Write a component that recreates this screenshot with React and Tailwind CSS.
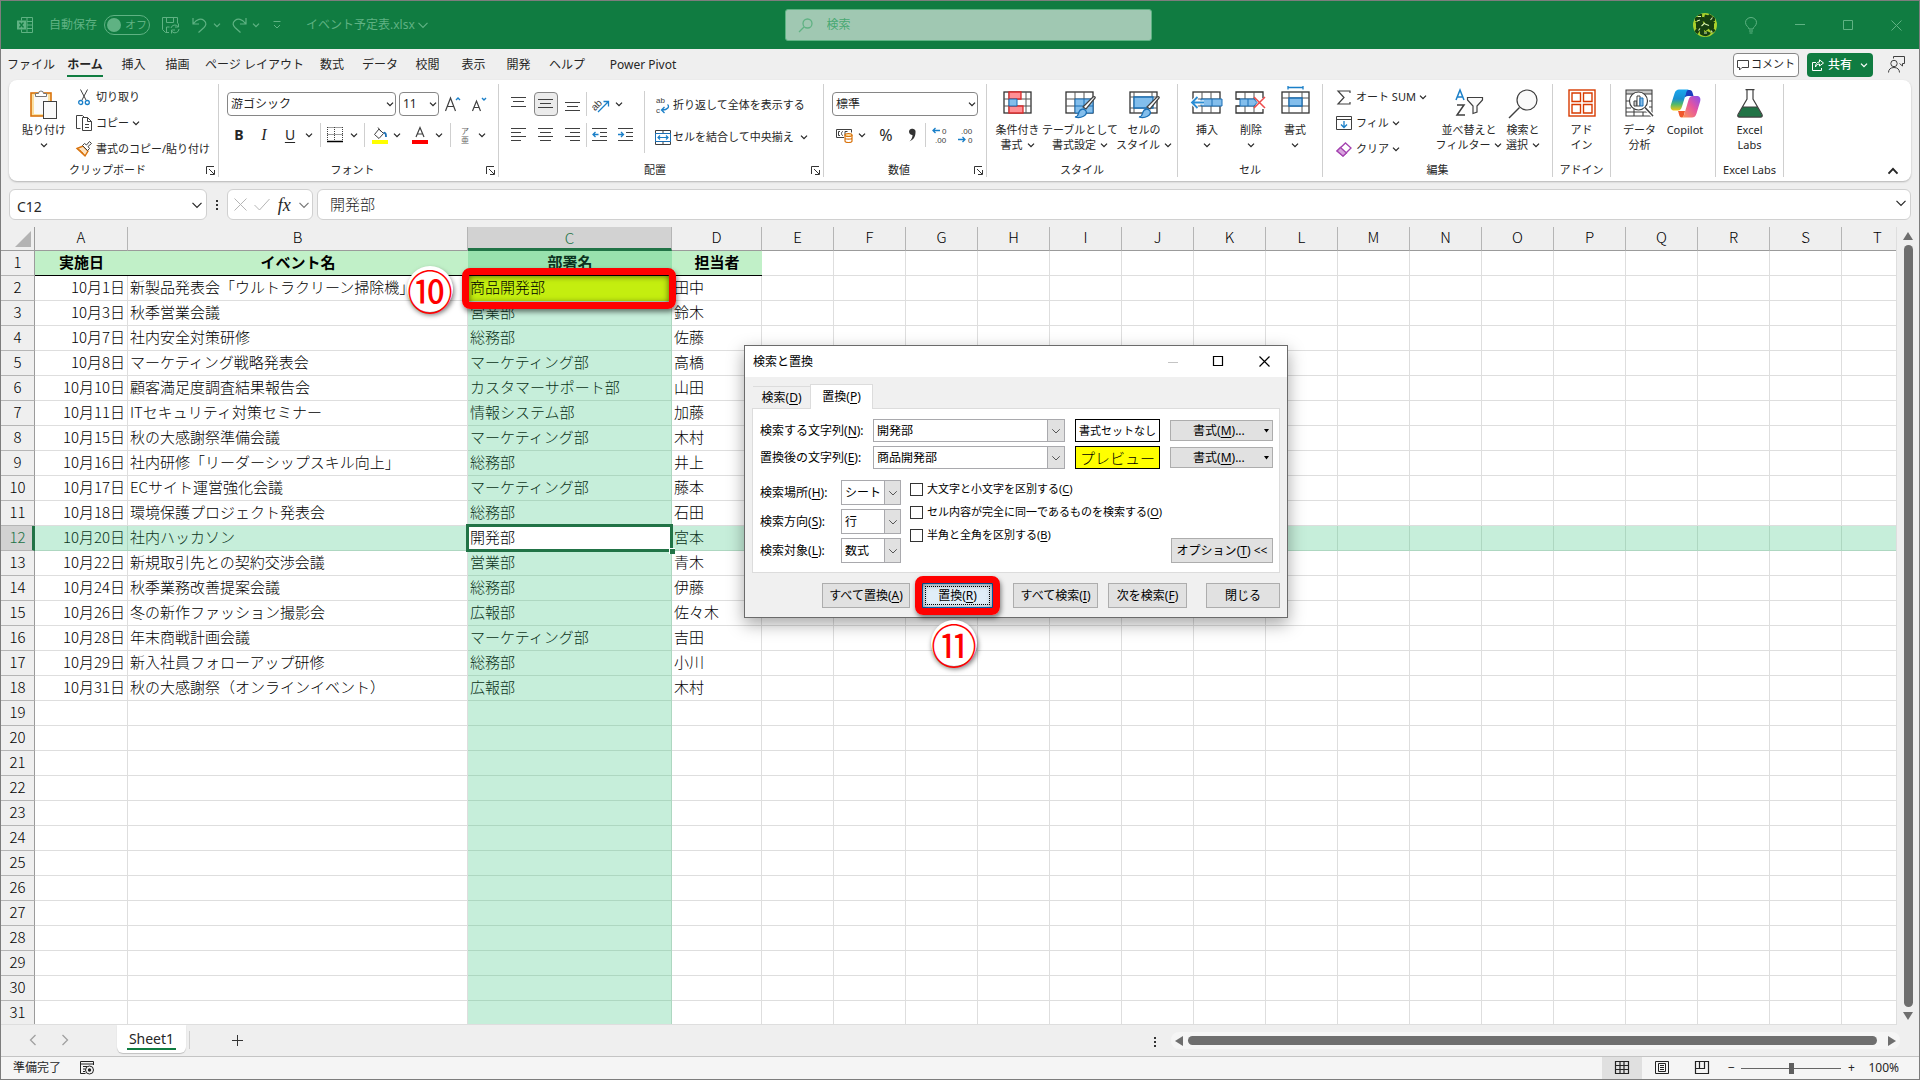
import {useState} from "react";

const columns = [
    {name: 'A', width: 'w-[93px]'},
    {name: 'B', width: 'w-[340px]'},
    {name: 'C', width: 'w-[204px]'},
    {name: 'D', width: 'w-[90px]'},
    ...'EFGHIJKLMNOPQRST'.split('').map((name) => ({name, width: 'w-[72px]'})),
];

const headings = ['実施日', 'イベント名', '部署名', '担当者'];

const events = [
    ['10月1日', '新製品発表会「ウルトラクリーン掃除機」', '商品開発部', '田中'],
    ['10月3日', '秋季営業会議', '営業部', '鈴木'],
    ['10月7日', '社内安全対策研修', '総務部', '佐藤'],
    ['10月8日', 'マーケティング戦略発表会', 'マーケティング部', '高橋'],
    ['10月10日', '顧客満足度調査結果報告会', 'カスタマーサポート部', '山田'],
    ['10月11日', 'ITセキュリティ対策セミナー', '情報システム部', '加藤'],
    ['10月15日', '秋の大感謝祭準備会議', 'マーケティング部', '木村'],
    ['10月16日', '社内研修「リーダーシップスキル向上」', '総務部', '井上'],
    ['10月17日', 'ECサイト運営強化会議', 'マーケティング部', '藤本'],
    ['10月18日', '環境保護プロジェクト発表会', '総務部', '石田'],
    ['10月20日', '社内ハッカソン', '開発部', '宮本'],
    ['10月22日', '新規取引先との契約交渉会議', '営業部', '青木'],
    ['10月24日', '秋季業務改善提案会議', '総務部', '伊藤'],
    ['10月26日', '冬の新作ファッション撮影会', '広報部', '佐々木'],
    ['10月28日', '年末商戦計画会議', 'マーケティング部', '吉田'],
    ['10月29日', '新入社員フォローアップ研修', '総務部', '小川'],
    ['10月31日', '秋の大感謝祭（オンラインイベント）', '広報部', '木村'],
];

const tabs = [
    {name: 'ファイル', width: 'w-[52px]'},
    {name: 'ホーム', width: 'w-[56px]', active: true},
    {name: '挿入', width: 'w-[41px]'},
    {name: '描画', width: 'w-[47px]'},
    {name: 'ページ レイアウト', width: 'w-[107px]'},
    {name: '数式', width: 'w-[48px]'},
    {name: 'データ', width: 'w-[48px]'},
    {name: '校閲', width: 'w-[47px]'},
    {name: '表示', width: 'w-[45px]'},
    {name: '開発', width: 'w-[45px]'},
    {name: 'ヘルプ', width: 'w-[52px]'},
    {name: 'Power Pivot', width: 'w-[100px]'},
];

const ROW_COUNT = 31;
const ACTIVE_ROW = 12;

/* ---------- small pieces ---------- */

function Chevron({className = 'w-2 h-2', up = false, thin = false}) {
    return (
        <svg className={`shrink-0 ${className}`} viewBox="0 0 8 8" fill="none" stroke="currentColor"
             strokeWidth={thin ? 0.8 : 1.3}>
            <path d={up ? 'M1 5.8 4 2.6 7 5.8' : 'M1 2.6 4 5.6 7 2.6'}/>
        </svg>
    );
}

function Svg({w, h, children}) {
    return (
        <svg className="shrink-0 overflow-visible font-['Liberation_Sans',sans-serif]" width={w} height={h}
             viewBox={`0 0 ${w} ${h}`} fill="none" stroke="#404040" strokeWidth="1">
            {children}
        </svg>
    );
}

function IconButton({label, className = 'w-6', children}) {
    return (
        <button type="button" aria-label={label} className={`h-6 shrink-0 flex items-center justify-center ${className}`}>
            {children}
        </button>
    );
}

function Arrow({label, className = 'w-4'}) {
    return <IconButton label={label} className={className}><Chevron/></IconButton>;
}

function Divider({className = 'mx-1'}) {
    return <div className={`w-px h-6 shrink-0 bg-[#cfcfcf] ${className}`}></div>;
}

function RibbonGroup({name, className, bodyClassName = '', launcher = false, children}) {
    return (
        <section className={`h-[93px] mt-1 shrink-0 flex flex-col border-r border-[#cfcfcf] ${className}`}>
            <div className={`flex-1 flex ${bodyClassName}`}>{children}</div>
            <div className="h-[14px] flex items-center">
                <div className="flex-1 text-center leading-[14px] whitespace-nowrap">{name}</div>
                {launcher && (
                    <button type="button" aria-label={`${name}の設定`} className="w-[12px] flex">
                        <Svg w={9} h={9}>
                            <path d="M.5 8V.5H8M3 3l5 5M8.5 4v4.5H4" stroke="#333"/>
                        </Svg>
                    </button>
                )}
            </div>
        </section>
    );
}

function BigButton({icon, lines, arrow, className}) {
    return (
        <button type="button" className={`shrink-0 pt-[5px] flex flex-col items-center justify-start ${className}`}>
            <span className="h-[33px] flex items-start">{icon}</span>
            {lines.map((line, index) => (
                <span key={index} className="h-[15px] leading-[15px] flex items-center gap-1 whitespace-nowrap">
                    {line}
                    {arrow && index === lines.length - 1 && <Chevron/>}
                </span>
            ))}
        </button>
    );
}

function SmallButton({icon, text, arrow}) {
    return (
        <button type="button" className="h-[26px] flex items-center gap-[3px] whitespace-nowrap">
            <span className="w-[18px] flex justify-center">{icon}</span>
            {text}
            {arrow && <Chevron/>}
        </button>
    );
}

function RibbonSelect({label, value, className}) {
    return (
        <div className={`relative h-6 ${className}`}>
            <select aria-label={label} defaultValue={value}
                    className="w-full h-full pl-[3px] appearance-none rounded border border-[#868686] bg-white text-xs leading-none">
                <option>{value}</option>
            </select>
            <Chevron className="absolute right-[2px] top-2 w-2 h-2 pointer-events-none"/>
        </div>
    );
}

/* ---------- icons ---------- */

const PasteIcon = (
    <Svg w={28} h={31}>
        <rect x="1" y="4" width="20" height="23" fill="#fbdfa0" stroke="#d9730d" strokeWidth="1.6"/>
        <rect x="4" y="6" width="14" height="19" fill="#fafafa" stroke="none"/>
        <path d="M5.5 7.500V4.500h3a2.500 2.500 0 0 1 5 0h3v3z" fill="#fff" stroke="#777"/>
        <rect x="13.500" y="12.500" width="13" height="17" fill="#fafafa"/>
    </Svg>
);

const CutIcon = (
    <Svg w={12} h={17}>
        <path d="M2.500.500 8 11M9.500.500 4 11"/>
        <circle cx="2.700" cy="13.500" r="2" stroke="#1a7fc8" strokeWidth="1.300"/>
        <circle cx="9.300" cy="13.500" r="2" stroke="#1a7fc8" strokeWidth="1.300"/>
    </Svg>
);

const CopyIcon = (
    <Svg w={17} h={16}>
        <path d="M4.500 13.500h-4V.500h6l2 2"/>
        <path d="M6.500 2.500h5l4 4v9h-9zM11.500 2.500v4h4M9 9.500h4M9 12.500h4"/>
    </Svg>
);

const BrushIcon = (
    <Svg w={16} h={16}>
        <path d="M1 7.500 7 5l5 5-3 5z" fill="#fde3c0" stroke="#d9730d" strokeWidth="1.400"/>
        <path d="M1 7.500c3 1 6 4 8 7.500" stroke="#d9730d"/>
        <path d="m6.500 4.500 2-2 2 1.500 3-3.500 2 2-3.500 3 1.500 2-2 2z" fill="#fff"/>
    </Svg>
);

const CellGrid = (
    <>
        <rect x="1" y="1" width="27" height="21" fill="#fff" stroke="#333" strokeWidth="1.300"/>
        <path d="M10 1v21M19 1v21M1 8h27M1 15h27" stroke="#555"/>
    </>
);

const PaintBrush = (
    <>
        <path d="m30 7-9 11-3-2L28 6c1-1 3 0 2 1z" fill="#fff" stroke="#444" strokeWidth="1.200"/>
        <path d="M10 26c3 0 3-2 4-5 1-3 5-4 7-1 2 4-5 8-11 6z" fill="#83beec" stroke="#1a6fb5" strokeWidth="1.300"/>
    </>
);

const ConditionalIcon = (
    <Svg w={29} h={30}>
        <rect x="1" y="1" width="27" height="21" fill="#fff" stroke="#333" strokeWidth="1.300"/>
        <path d="M6 1v21M23 1v21M1 8h27M1 15h27" stroke="#555"/>
        <path d="M6 1h12v7H6zM6 15h14v7H6z" fill="#ff8f94" stroke="#d92c2c" strokeWidth="1.300"/>
        <path d="M6 8h8v7H6z" fill="#83beec" stroke="#1a6fb5"/>
    </Svg>
);

const TableStyleIcon = (
    <Svg w={31} h={30}>
        {CellGrid}
        <path d="M10 8h18v14H10z" fill="#83beec" stroke="#1a6fb5"/>
        <path d="M19 8v14M10 15h18" stroke="#1a6fb5"/>
        {PaintBrush}
    </Svg>
);

const CellStyleIcon = (
    <Svg w={31} h={30}>
        <rect x="1" y="1" width="27" height="21" fill="#fff" stroke="#333" strokeWidth="1.300"/>
        <path d="M5 1v21M23 1v5M1 6h27M1 17h27" stroke="#555"/>
        <path d="M5 6h19v11H5z" fill="#83beec" stroke="#1a6fb5" strokeWidth="1.300"/>
        {PaintBrush}
    </Svg>
);

const InsertIcon = (
    <Svg w={32} h={30}>
        <rect x="2" y="1" width="27" height="21" fill="#fff" stroke="#333" strokeWidth="1.300"/>
        <path d="M11 1v21M20 1v21M2 15h27M2 8h27" stroke="#555"/>
        <path d="M10 8h21v7H10zM21 8v7" fill="#83beec" stroke="#1a6fb5"/>
        <path d="M13 11.500H1M6 6.500l-5 5 5 5" stroke="#fff" strokeWidth="4"/>
        <path d="M13 11.500H1M6.500 6l-5.500 5.500L6.500 17" stroke="#2a8dd4" strokeWidth="1.800"/>
    </Svg>
);

const DeleteIcon = (
    <Svg w={32} h={30}>
        <path d="M28 7V1H1v7h4M5 15H1v7h27v-4" stroke="#333" strokeWidth="1.300"/>
        <path d="M10 1v7M19 1v7M10 15v7M19 15v7M1 8h20M1 15h20" stroke="#555"/>
        <path d="M5 8h14l3 3.500-3 3.500H5zM13 8v7" fill="#83beec" stroke="#1a6fb5"/>
        <path d="m19 6 11 11M30 6 19 17" stroke="#ee4b4b" strokeWidth="1.500"/>
    </Svg>
);

const FormatIcon = (
    <Svg w={29} h={36}>
        <path d="M7 1.500h15M7 0v3.500M22 0v3.500" stroke="#1a7fc8" strokeWidth="1.300"/>
        <rect x="1" y="6" width="27" height="21" fill="#fff" stroke="#333" strokeWidth="1.300"/>
        <path d="M8 6v21M21 6v21M1 12h27M1 20h27" stroke="#555"/>
        <path d="M8 12h13v8H8z" fill="#83beec" stroke="#1a6fb5" strokeWidth="1.300"/>
    </Svg>
);

const SumIcon = <Svg w={14} h={15}><path d="M13 3V1H1l6 6.500L1 14h12v-2" strokeWidth="1.200"/></Svg>;

const FillIcon = (
    <Svg w={16} h={14}>
        <path d="M.500.500h15v13H.500zM.500 3.500h15"/>
        <path d="M8 5v6.500M5 8.500l3 3 3-3" stroke="#1a7fc8" strokeWidth="1.300"/>
    </Svg>
);

const ClearIcon = (
    <Svg w={16} h={15}>
        <path d="M9.500 1 15 6 7 14 1 9z" fill="#fff" stroke="#a443b0" strokeWidth="1.300"/>
        <path d="M4.500 5.500 10.500 11 7 14 1 9z" fill="#d9a4de" stroke="#a443b0" strokeWidth="1.300"/>
    </Svg>
);

const SortIcon = (
    <Svg w={28} h={30}>
        <path d="m1 11 4-10 4 10M2.500 8h5" stroke="#1a7fc8" strokeWidth="1.500"/>
        <path d="M2 16h7L2 26h8" strokeWidth="1.500"/>
        <path d="M12.500 8.500h15v2.500l-5.500 6v6l-4 1.500V17l-5.500-6z" fill="#fafafa" strokeWidth="1.200"/>
    </Svg>
);

const FindIcon = (
    <Svg w={30} h={30}>
        <circle cx="19" cy="11" r="10" fill="#fafafa" strokeWidth="1.200"/>
        <path d="M11.500 18.500 1 29" strokeWidth="1.500"/>
    </Svg>
);

const AddinIcon = (
    <Svg w={28} h={28}>
        <g stroke="#d83b01" strokeWidth="1.400">
            <rect x="1" y="1" width="26" height="26"/>
            <path d="M4 4h8.500v8.500H4zM15.500 4H24v8.500h-8.500zM4 15.500h8.500V24H4zM15.500 15.500H24V24h-8.500z"/>
        </g>
    </Svg>
);

const AnalyzeIcon = (
    <Svg w={29} h={29}>
        <path d="M1 1h26v4H1z" fill="#c8c8c8" stroke="none"/>
        <path d="M1 1h26v26H1zM1 5h26M1 12h3M1 19h5M1 23h26M9 20v7M18 23v4M24 12h3M24 18h3" strokeWidth="1.100"/>
        <circle cx="13.500" cy="12" r="9" fill="#fff" strokeWidth="1.200"/>
        <path d="m20 18.500 8 8.500" stroke="#fff" strokeWidth="4"/>
        <path d="m20 18.500 8 8.500" strokeWidth="1.500"/>
        <path d="M9 12h3v5H9z" fill="#c8c8c8"/>
        <path d="M12 7h3v10h-3z" fill="#fff"/>
        <path d="M15 9h3v8h-3z" fill="#83beec" stroke="#1a6fb5"/>
    </Svg>
);

const CopilotIcon = (
    <svg width="31" height="29" viewBox="0 0 31 29">
        <defs>
            <linearGradient id="copilotLeft" x1="0" y1="0" x2="0" y2="1">
                <stop offset="0" stopColor="#1ba7ee"/>
                <stop offset=".45" stopColor="#1a8fd0"/>
                <stop offset=".7" stopColor="#52b96b"/>
                <stop offset="1" stopColor="#f3c614"/>
            </linearGradient>
            <linearGradient id="copilotRight" x1="1" y1="0" x2="0" y2="1">
                <stop offset="0" stopColor="#8a4ff0"/>
                <stop offset=".45" stopColor="#e455a0"/>
                <stop offset="1" stopColor="#ff9a50"/>
            </linearGradient>
        </defs>
        <path d="M8 22h7l-1 4c-.500 1.500-1 2.500-2.500 2.500C9 28.500 9 24 8 22z" fill="#f0582b"/>
        <path d="M16 1h4c2 0 2.500 2 3.500 6h-5.500c-2 0-3 1-3.500 2z" fill="#1c3fbf"/>
        <path d="M9 .500h10c-2 .500-2.500 2-3 4l-4 13c-.700 2.500-2 4-4 4H4c-3 0-4-2.500-3-6L4.500 4.500C5.500 1.500 7 .500 9 .500z"
              fill="url(#copilotLeft)"/>
        <path d="M22 28.500H11.500c2-.500 2.500-2 3-4l4-13.500c.700-2.500 2-4 4-4H27c3 0 4 2.500 3 6l-3.500 11.500c-1 3-2.500 4-4.500 4z"
              fill="url(#copilotRight)"/>
    </svg>
);

const FlaskIcon = (
    <Svg w={26} h={29}>
        <path d="M5.500 18h15l4.500 8c.500 1.500 0 2-1.500 2h-21C1 28 .500 27.500 1 26z" fill="#217346" stroke="none"/>
        <path d="M8.500.700h9M10 1v9L1 25.500c-.700 1.500 0 2.700 1.500 2.700h21c1.500 0 2.200-1.200 1.500-2.700L16 10V1M5.500 18h15"
              strokeWidth="1.200"/>
    </Svg>
);

function AlignIcon({lines}) {
    return (
        <Svg w={16} h={16}>
            {lines.map(([x1, x2, y], index) => <path key={index} d={`M${x1} ${y}.5H${x2}`} strokeWidth="1.200"/>)}
        </Svg>
    );
}

/* ---------- window ---------- */

function TitleBar() {
    return (
        <header className="h-12 shrink-0 flex items-center bg-[#107c41] text-[#5fb283]">
            <div className="flex-1 flex items-center pl-4 text-xs">
                <svg width="16" height="16" viewBox="0 0 16 16" fill="none" stroke="currentColor">
                    <path d="M4.500 3.500v-3h11v15h-11v-3M10 .500v15M10 4.500h5.500M10 8h5.500M10 11.500h5.500"/>
                    <path d="M0 3.500h9v9H0z" fill="currentColor" stroke="none"/>
                    <path d="m2.500 5.500 4 5M6.500 5.500l-4 5" stroke="#107c41" strokeWidth="1.300"/>
                </svg>
                <span className="ml-4 w-12 whitespace-nowrap" id="autosave">自動保存</span>
                <button type="button" role="switch" aria-checked="false" aria-labelledby="autosave"
                        className="ml-[7px] w-[46px] h-5 rounded-full border border-[#5fb283] flex items-center px-[2px] gap-1 text-[11px]">
                    <span className="w-[14px] h-[14px] rounded-full bg-[#5fb283]"></span>オフ
                </button>
                <button type="button" aria-label="上書き保存" className="ml-3">
                    <svg width="18" height="17" viewBox="0 0 18 17" fill="none" stroke="currentColor">
                        <path d="M7 15.500H3.500l-3-3V.500h15v6M4.500.500v5h7v-5M4.500 15v-5h3"/>
                        <path d="M9 11a4 4 0 0 1 7-1.500M16.500 6.500v3.500H13M17 12a4 4 0 0 1-7 2.500M9.500 16.500V13H13"/>
                    </svg>
                </button>
                <button type="button" aria-label="元に戻す" className="ml-3 flex items-center gap-[5px]">
                    <svg width="16" height="16" viewBox="0 0 16 16" fill="none" stroke="currentColor" strokeWidth="1.200">
                        <path d="M1 1v6h6M1.500 6.500C5 2 9 1 12 3.500s2 5 0 7L6.500 15.500"/>
                    </svg>
                    <Chevron/>
                </button>
                <button type="button" aria-label="やり直し" className="ml-[10px] flex items-center gap-[5px]">
                    <svg width="16" height="16" viewBox="0 0 16 16" fill="none" stroke="currentColor" strokeWidth="1.200">
                        <path d="M15 1v6H9M14.500 6.500C11 2 7 1 4 3.500s-2 5 0 7l5.500 5"/>
                    </svg>
                    <Chevron/>
                </button>
                <button type="button" aria-label="クイック アクセス ツール バーのカスタマイズ" className="ml-3">
                    <svg width="10" height="10" viewBox="0 0 10 10" fill="none" stroke="currentColor">
                        <path d="M1.500 1.500h7M2 5l3 3 3-3"/>
                    </svg>
                </button>
                <button type="button" className="ml-6 flex items-center gap-[2px] whitespace-nowrap">
                    イベント予定表.xlsx <Chevron thin className="w-3 h-3"/>
                </button>
            </div>
            <label className="w-[367px] h-8 rounded-[3px] border border-[#5fb283] bg-[#a0c8b2] flex items-center px-3 gap-[14px] text-xs">
                <svg width="15" height="15" viewBox="0 0 15 15" fill="none" stroke="currentColor" strokeWidth="1.300">
                    <circle cx="9.500" cy="5.500" r="4.500"/>
                    <path d="M6 9 1 14"/>
                </svg>
                <input type="search" aria-label="検索" placeholder="検索"
                       className="flex-1 bg-transparent outline-none placeholder:text-[#48a873]"/>
            </label>
            <div className="flex-1 flex items-center justify-end">
                <button type="button" aria-label="アカウント" className="w-6 h-6 mr-[26px]">
                    <svg width="24" height="24" viewBox="0 0 24 24">
                        <clipPath id="avatar"><circle cx="12" cy="12" r="12"/></clipPath>
                        <g clipPath="url(#avatar)">
                            <path d="M0 0h24v24H0z" fill="#a9d12c"/>
                            <path d="M2 6h9M7 1v8M3 11l7-2M14 2l-2 7M12 6h10M18 2l-5 9M16 8l5 3M3 13h18M6 15l-3 5M9 14v6c3 2 6 1 7-1M12 14l2 3M17 14l4 5"
                                  fill="none" stroke="#173f10" strokeWidth="4.200"/>
                            <path d="M5 3.500h3M4 8l3-1M12 10 8.500 13M12 11l4 1.500M5.500 17.500l1.500-2M11 20h3M17.500 7l2-2.500M18 17.500l1.500 2"
                                  fill="none" stroke="#d8efb0" strokeWidth="1.100"/>
                        </g>
                    </svg>
                </button>
                <button type="button" aria-label="ヒント" className="w-4 h-6 flex items-center justify-center mr-9">
                    <svg width="12" height="17" viewBox="0 0 12 17" fill="none" stroke="currentColor">
                        <path d="M4 12c0-2-3.500-3-3.500-6.500a5.500 5 0 0 1 11 0C11.500 9 8 10 8 12zM4 14h4M4.500 16h3"/>
                    </svg>
                </button>
                <button type="button" aria-label="最小化" className="w-3 h-6 flex items-center mr-9">
                    <svg width="10" height="10" viewBox="0 0 10 10" stroke="currentColor"><path d="M0 4.500h10"/></svg>
                </button>
                <button type="button" aria-label="最大化" className="w-3 h-6 flex items-center mr-9">
                    <svg width="11" height="11" viewBox="0 0 11 11" fill="none" stroke="currentColor">
                        <path d="M.500.500h9v9h-9z"/>
                    </svg>
                </button>
                <button type="button" aria-label="閉じる" className="w-3 h-6 flex items-center mr-4">
                    <svg width="11" height="11" viewBox="0 0 11 11" stroke="currentColor"><path d="m.500.500 10 10M10.500.500l-10 10"/></svg>
                </button>
            </div>
        </header>
    );
}

function TabBar() {
    return (
        <nav className="h-[31px] shrink-0 flex items-center pl-1 pr-[14px] text-xs text-[#262626]">
            {tabs.map((tab) => (
                <button key={tab.name} type="button"
                        className={`h-full shrink-0 flex items-start justify-center whitespace-nowrap ${tab.width}`}>
                    <span className={tab.active
                        ? 'h-7 leading-8 font-bold border-b-2 border-[#107c41]'
                        : 'h-7 leading-8'}>
                        {tab.name}
                    </span>
                </button>
            ))}
            <div className="flex-1"></div>
            <button type="button" className="h-6 px-[3px] gap-[2px] flex items-center rounded border border-[#868686] bg-white text-[11px] whitespace-nowrap">
                <Svg w={12} h={12}><path d="M.500 1.500h11v7H5l-2.500 2.500V8.500h-2z"/></Svg>
                コメント
            </button>
            <button type="button" className="ml-2 h-6 px-[5px] gap-1 flex items-center rounded bg-[#107c41] text-white font-medium whitespace-nowrap">
                <svg width="12" height="12" viewBox="0 0 12 12" fill="none" stroke="currentColor">
                    <path d="M4 3.500H.500v8h9V9M7.500.800 11.500 4 7.500 7V5C5 5 4 6.500 3.500 8c0-3 1.500-5 4-5z"/>
                </svg>
                共有
                <Chevron className="ml-1 w-2 h-2"/>
            </button>
            <button type="button" aria-label="共同編集者" className="ml-[15px]">
                <Svg w={17} h={17}>
                    <circle cx="6" cy="7.500" r="3.200"/>
                    <path d="M.500 16.500c0-3 2-5 5.500-5s5.500 2 5.500 5M5.500 2.500v-2h11v7h-2v2.500l-3-2.500"/>
                </Svg>
            </button>
        </nav>
    );
}

function Ribbon() {
    return (
        <div className="h-[101px] mx-2 shrink-0 flex rounded-lg bg-white shadow-[0_1px_2px_rgba(0,0,0,0.25)] text-[11px] text-[#262626] overflow-hidden">
            <RibbonGroup name="クリップボード" launcher className="w-[210px]">
                <BigButton icon={PasteIcon} lines={['貼り付け', '']} arrow className="ml-1 w-[62px]"/>
                <div className="flex flex-col">
                    <SmallButton icon={CutIcon} text="切り取り"/>
                    <SmallButton icon={CopyIcon} text="コピー" arrow/>
                    <SmallButton icon={BrushIcon} text="書式のコピー/貼り付け"/>
                </div>
            </RibbonGroup>

            <RibbonGroup name="フォント" launcher className="w-[280px]" bodyClassName="pl-2">
                <div className="pt-2 flex flex-col gap-[7px]">
                    <div className="flex">
                        <RibbonSelect label="フォント" value="游ゴシック" className="w-[169px]"/>
                        <RibbonSelect label="フォント サイズ" value="11" className="w-10 ml-[3px]"/>
                        <IconButton label="フォント サイズの拡大" className="w-7">
                            <Svg w={16} h={16}>
                                <path d="m.500 15 5-13 5 13M2.500 10.500h6" strokeWidth="1.200"/>
                                <path d="m11 4 2-2 2 2" stroke="#1a7fc8" strokeWidth="1.400"/>
                            </Svg>
                        </IconButton>
                        <IconButton label="フォント サイズの縮小" className="w-6">
                            <Svg w={16} h={16}>
                                <path d="m1.500 15 4-10 4 10M3 11.500h5" strokeWidth="1.200"/>
                                <path d="m11 2 2 2 2-2" stroke="#1a7fc8" strokeWidth="1.400"/>
                            </Svg>
                        </IconButton>
                    </div>
                    <div className="flex">
                        <IconButton label="太字"><b className="text-sm">B</b></IconButton>
                        <IconButton label="斜体" className="w-[26px]">
                            <i className="text-base font-['Liberation_Serif',serif]">I</i>
                        </IconButton>
                        <IconButton label="下線" className="w-[26px]"><u className="text-sm underline-offset-2">U</u></IconButton>
                        <Arrow label="下線の種類" className="w-3"/>
                        <Divider className="mx-[5px]"/>
                        <IconButton label="罫線" className="w-[18px]">
                            <Svg w={16} h={16}>
                                <path d="M.500.500h15M.500 7.500h15M.500 0v14M7.500 0v14M15.500 0v14" strokeDasharray="1 1"/>
                                <path d="M0 14.500h16" stroke="#000" strokeWidth="1.600"/>
                            </Svg>
                        </IconButton>
                        <Arrow label="罫線の種類" className="w-5"/>
                        <Divider className="ml-0 mr-[6px]"/>
                        <IconButton label="塗りつぶしの色" className="w-[18px]">
                            <Svg w={16} h={17}>
                                <path d="M7 2 2.500 7.500 7 11.500 11.500 6.500zM6 .500l3 4"/>
                                <path d="M11.500 6c2-1 2.500 1 2.500 4" stroke="#1a6fb5" strokeWidth="1.800"/>
                                <path d="M0 13h16v4H0z" fill="#ff0" stroke="none"/>
                            </Svg>
                        </IconButton>
                        <Arrow label="塗りつぶしの色の選択"/>
                        <IconButton label="フォントの色" className="w-[26px] ml-[2px]">
                            <Svg w={16} h={17}>
                                <path d="m4 10 4-9.500L12 10M5.500 7h5" strokeWidth="1.200"/>
                                <path d="M0 13h16v4H0z" fill="#f00" stroke="none"/>
                            </Svg>
                        </IconButton>
                        <Arrow label="フォントの色の選択" className="w-3"/>
                        <Divider className="mx-[5px]"/>
                        <IconButton label="ふりがなの表示" className="w-[18px]">
                            <span className="flex flex-col text-[8px] leading-[9px] text-[#666]"><span>ア</span><span>亜</span></span>
                        </IconButton>
                        <Arrow label="ふりがなの設定"/>
                    </div>
                </div>
            </RibbonGroup>

            <RibbonGroup name="配置" launcher className="w-[325px]" bodyClassName="pl-[6px]">
                <div className="pt-2 grid grid-cols-[27px_27px_27px] gap-y-[7px] content-start justify-items-center">
                    <IconButton label="上揃え"><AlignIcon lines={[[0, 15, 1], [2, 13, 5], [0, 15, 10]]}/></IconButton>
                    <IconButton label="上下中央揃え" className="w-6 rounded border border-[#868686] bg-[#ebebeb]">
                        <AlignIcon lines={[[0, 15, 3], [2, 13, 7], [0, 15, 11]]}/>
                    </IconButton>
                    <IconButton label="下揃え"><AlignIcon lines={[[0, 15, 6], [2, 13, 10], [0, 15, 14]]}/></IconButton>
                    <IconButton label="左揃え"><AlignIcon lines={[[0, 15, 1], [0, 10, 5], [0, 15, 9], [0, 10, 13]]}/></IconButton>
                    <IconButton label="中央揃え"><AlignIcon lines={[[0, 15, 1], [2, 13, 5], [0, 15, 9], [2, 13, 13]]}/></IconButton>
                    <IconButton label="右揃え"><AlignIcon lines={[[0, 15, 1], [5, 15, 5], [0, 15, 9], [5, 15, 13]]}/></IconButton>
                </div>
                <div className="pt-2 w-[58px] flex flex-col gap-[7px]">
                    <div className="flex">
                        <Divider className="mr-[2px]"/>
                        <IconButton label="方向">
                            <Svg w={18} h={17}>
                                <text x="-1" y="12" fontSize="10" fill="#404040" stroke="none" transform="rotate(-45 5 9)">ab</text>
                                <path d="M6 16 16 6M11.500 5.500H16.500V10.500" stroke="#1a7fc8" strokeWidth="1.300"/>
                            </Svg>
                        </IconButton>
                        <Arrow label="方向の選択" className="w-3"/>
                    </div>
                    <div className="flex">
                        <Divider className="mr-0"/>
                        <IconButton label="インデントを減らす" className="w-[26px]">
                            <Svg w={16} h={14}>
                                <path d="M0 .500h15M8 4.500h7M8 8.500h7M0 12.500h15"/>
                                <path d="M6.500 6.500H1M3.500 4 1 6.500 3.500 9" stroke="#1a7fc8" strokeWidth="1.300"/>
                            </Svg>
                        </IconButton>
                        <IconButton label="インデントを増やす" className="w-[26px]">
                            <Svg w={16} h={14}>
                                <path d="M0 .500h15M8 4.500h7M8 8.500h7M0 12.500h15"/>
                                <path d="M0 6.500h5.500M3 4l2.500 2.500L3 9" stroke="#1a7fc8" strokeWidth="1.300"/>
                            </Svg>
                        </IconButton>
                    </div>
                </div>
                <div className="mt-[7px] h-[62px] pl-[10px] flex flex-col gap-2 border-l border-[#cfcfcf]">
                    <button type="button" className="h-6 pt-1 flex items-center gap-[2px] whitespace-nowrap">
                        <Svg w={16} h={18}>
                            <text x="1" y="7" fontSize="8" fill="#404040" stroke="none">ab</text>
                            <text x="1" y="17" fontSize="8" fill="#404040" stroke="none">c</text>
                            <path d="M12.500 8.500c2.500 2 0 5.500-5 5.500M9.500 11l-3 3 3 3" stroke="#1a7fc8" strokeWidth="1.300"/>
                        </Svg>
                        折り返して全体を表示する
                    </button>
                    <button type="button" className="h-6 pt-1 flex items-center gap-[2px] whitespace-nowrap">
                        <Svg w={16} h={15}>
                            <path d="M.500.500h15v14H.500zM8 .500v3M8 11.500v3"/>
                            <path d="M.500 3.500h15v8H.500z" fill="#fff" stroke="#1a6fb5"/>
                            <path d="M3 7.500h10M5 5.500l-2 2 2 2M11 5.500l2 2-2 2" stroke="#1a7fc8" strokeWidth="1.200"/>
                        </Svg>
                        セルを結合して中央揃え
                        <Chevron className="ml-1 w-2 h-2"/>
                    </button>
                </div>
            </RibbonGroup>

            <RibbonGroup name="数値" launcher className="w-[163px]" bodyClassName="pl-2">
                <div className="pt-2 flex flex-col gap-[7px]">
                    <RibbonSelect label="表示形式" value="標準" className="w-[146px]"/>
                    <div className="flex pl-1">
                        <IconButton label="通貨表示形式" className="w-[17px]">
                            <Svg w={17} h={15}>
                                <path d="M8 9.500H.500v-8h15v3M4 3.500H2.500v4H4M7 3.500c-2 0-2 4 0 4M9 7V3.500h2.500"/>
                                <path d="M9 7v6c0 2 7 2 7 0V7M9 10c0 1.500 7 1.500 7 0" fill="#fff" stroke="#d9730d" strokeWidth="1.200"/>
                                <ellipse cx="12.500" cy="7" rx="3.500" ry="1.500" fill="#fbdfa0" stroke="#d9730d" strokeWidth="1.200"/>
                            </Svg>
                        </IconButton>
                        <Arrow label="通貨の選択" className="w-[18px]"/>
                        <IconButton label="パーセント スタイル" className="w-[30px]"><span className="text-base">%</span></IconButton>
                        <IconButton label="桁区切りスタイル" className="w-[22px]">
                            <Svg w={9} h={14}>
                                <path d="M1 3.500a3 3 0 1 1 6.500 1C7.500 9 5 12 1.500 13.500 4 11 4.500 9 4.500 7 2.500 7 1 5.500 1 3.500z" fill="#333" stroke="none"/>
                            </Svg>
                        </IconButton>
                        <Divider className="ml-[2px] mr-[6px]"/>
                        <IconButton label="小数点以下の表示桁数を増やす" className="w-4">
                            <Svg w={16} h={18}>
                                <text x="10" y="8" fontSize="8" fill="#404040" stroke="none">0</text>
                                <text x="3" y="17" fontSize="8" fill="#404040" stroke="none">.00</text>
                                <path d="M8 4.500H1M3.500 2 1 4.500 3.500 7" stroke="#1a7fc8" strokeWidth="1.300"/>
                            </Svg>
                        </IconButton>
                        <IconButton label="小数点以下の表示桁数を減らす" className="w-4 ml-[10px]">
                            <Svg w={16} h={18}>
                                <text x="3" y="8" fontSize="8" fill="#404040" stroke="none">.00</text>
                                <text x="10" y="17" fontSize="8" fill="#404040" stroke="none">0</text>
                                <path d="M0 13.500h7M4.500 11 7 13.500 4.500 16" stroke="#1a7fc8" strokeWidth="1.300"/>
                            </Svg>
                        </IconButton>
                    </div>
                </div>
            </RibbonGroup>

            <RibbonGroup name="スタイル" className="w-[191px]">
                <BigButton icon={<span className="pt-[2px]">{ConditionalIcon}</span>} lines={['条件付き', '書式']} arrow className="w-[61px]"/>
                <BigButton icon={<span className="pt-[2px]">{TableStyleIcon}</span>} lines={['テーブルとして', '書式設定']} arrow className="w-[64px]"/>
                <BigButton icon={<span className="pt-[2px]">{CellStyleIcon}</span>} lines={['セルの', 'スタイル']} arrow className="w-[64px]"/>
            </RibbonGroup>

            <RibbonGroup name="セル" className="w-[145px]" bodyClassName="pl-[7px]">
                <BigButton icon={<span className="pt-[2px]">{InsertIcon}</span>} lines={['挿入', '']} arrow className="w-11"/>
                <BigButton icon={<span className="pt-[2px]">{DeleteIcon}</span>} lines={['削除', '']} arrow className="w-11"/>
                <BigButton icon={<span className="-mt-[3px]">{FormatIcon}</span>} lines={['書式', '']} arrow className="w-11"/>
            </RibbonGroup>

            <RibbonGroup name="編集" className="w-[230px]" bodyClassName="pl-3">
                <div className="w-[102px] flex flex-col items-start">
                    <SmallButton icon={SumIcon} text="オート SUM" arrow/>
                    <SmallButton icon={FillIcon} text="フィル" arrow/>
                    <SmallButton icon={ClearIcon} text="クリア" arrow/>
                </div>
                <BigButton icon={SortIcon} lines={['並べ替えと', 'フィルター']} arrow className="w-[64px]"/>
                <BigButton icon={FindIcon} lines={['検索と', '選択']} arrow className="w-11"/>
            </RibbonGroup>

            <RibbonGroup name="アドイン" className="w-[58px]">
                <BigButton icon={AddinIcon} lines={['アド', 'イン']} className="w-full"/>
            </RibbonGroup>

            <RibbonGroup name="" className="w-[105px]" bodyClassName="pl-[6px]">
                <BigButton icon={AnalyzeIcon} lines={['データ', '分析']} className="w-[45px]"/>
                <BigButton icon={CopilotIcon} lines={['Copilot']} className="w-[46px]"/>
            </RibbonGroup>

            <RibbonGroup name="Excel Labs" className="w-[68px]">
                <BigButton icon={FlaskIcon} lines={['Excel', 'Labs']} className="w-full"/>
            </RibbonGroup>

            <div className="flex-1 flex items-end justify-end pr-3 pb-1">
                <button type="button" aria-label="リボンを折りたたむ"><Chevron up className="w-3 h-3"/></button>
            </div>
        </div>
    );
}

function FormulaBar() {
    return (
        <div className="h-[31px] mt-2 mb-[7px] mx-2 shrink-0 flex text-[#262626]">
            <div className="relative w-[198px]">
                <input aria-label="名前ボックス" defaultValue="C12"
                       className="w-full h-full pl-[7px] pt-1 rounded-md border border-[#d0d0d0] bg-white text-sm"/>
                <Chevron thin className="absolute right-1 top-[10px] w-3 h-3"/>
            </div>
            <div className="w-5 flex flex-col items-center justify-center gap-[2px]">
                <span className="w-[2px] h-[2px] bg-[#333]"></span>
                <span className="w-[2px] h-[2px] bg-[#333]"></span>
                <span className="w-[2px] h-[2px] bg-[#333]"></span>
            </div>
            <div className="w-[86px] mr-1 flex items-center justify-between pl-[6px] pr-[2px] rounded-md border border-[#d0d0d0] bg-white">
                <button type="button" aria-label="キャンセル">
                    <Svg w={13} h={13}><path d="m.500.500 12 12M12.500.500l-12 12" stroke="#b5b5b5"/></Svg>
                </button>
                <button type="button" aria-label="入力">
                    <Svg w={16} h={13}><path d="m.500 7 5 5L15.500 1" stroke="#b5b5b5"/></Svg>
                </button>
                <button type="button" aria-label="関数の挿入" className="font-['Liberation_Serif',serif] italic text-lg leading-none">
                    fx
                </button>
                <Chevron thin className="w-3 h-3 text-[#777]"/>
            </div>
            <div className="relative flex-1">
                <input aria-label="数式バー" defaultValue="開発部"
                       className="w-full h-full pl-3 pb-[3px] rounded-md border border-[#d0d0d0] bg-white text-[15px] font-light"/>
                <Chevron thin className="absolute right-1 top-2 w-3 h-3"/>
            </div>
        </div>
    );
}

function StepNumber({className, children}) {
    return (
        <span className={`absolute z-20 w-[46px] h-[46px] flex items-center justify-center rounded-full bg-white shadow-[1px_3px_5px_rgba(0,0,0,0.55)] font-['Noto_Sans_CJK_JP',sans-serif] text-[46px] leading-none font-normal text-[#ff0000] ${className}`}>
            {children}
        </span>
    );
}

function Cell({row, column, index}) {
    const isActiveRow = row === ACTIVE_ROW;
    const isActiveColumn = column.name === 'C';

    // Title line of the list
    if (row === 1 && index < 4) {
        return (
            <th scope="col"
                className={`h-[25px] p-0 align-top border-b border-black text-center font-bold ${isActiveColumn ? 'bg-[#98e2ae] text-[#0b3320]' : 'bg-[#c1f0c8]'}`}>
                {headings[index]}
            </th>
        );
    }

    const value = events[row - 2]?.[index] ?? '';

    if (isActiveColumn && row === 2) {
        return (
            <td className="relative h-[25px] px-[2px] py-0 align-top bg-[#c4ee0f]">
                {value}
                <span className="absolute z-10 -left-[6px] -right-1 -inset-y-2 rounded-lg border-[7px] border-[#ff0000] shadow-[1px_3px_5px_rgba(0,0,0,0.5),inset_0_1px_6px_rgba(0,0,0,0.6)]"></span>
                <StepNumber className="-left-[61px] -top-[10px]">⑩</StepNumber>
            </td>
        );
    }

    if (isActiveColumn && isActiveRow) {
        return (
            <td className="relative h-[25px] px-[2px] py-0 align-top bg-white">
                {value}
                <span className="absolute -inset-[2px] right-[-1px] bottom-[-1px] border-3 border-[#217346]"></span>
                <span className="absolute -right-[3px] -bottom-[3px] w-[6px] h-[6px] border-t border-l border-white bg-[#217346]"></span>
            </td>
        );
    }

    const tint = isActiveRow || isActiveColumn
        ? 'bg-[#c6eeda] border-[#aed7c1] text-[#0b3320]'
        : 'border-[#dedede]';

    return (
        <td className={`h-[25px] px-[2px] py-0 align-top border-r border-b ${tint} ${index === 0 ? 'text-right' : ''}`}>
            {value}
        </td>
    );
}

function Sheet() {
    const rows = Array.from({length: ROW_COUNT}, (_, index) => index + 1);

    return (
        <div className="flex-1 min-h-0 flex">
            <div className="flex-1 min-w-0 overflow-hidden border-b border-r border-[#dedede] bg-white">
                <table className="table-fixed w-px border-separate border-spacing-0 font-['Noto_Sans_CJK_JP',sans-serif] text-[15px] leading-[22px] font-light text-black whitespace-nowrap">
                    <colgroup>
                        <col className="w-[34px]"/>
                        {columns.map((column) => <col key={column.name} className={column.width}/>)}
                    </colgroup>
                    <thead>
                    <tr>
                        <td className="h-6 p-0 bg-[#efefef] border-r border-b border-[#9b9b9b]">
                            <svg className="ml-[14px]" width="16" height="16" viewBox="0 0 16 16">
                                <path d="M16 0v16H0z" fill="#b3b3b3"/>
                            </svg>
                        </td>
                        {columns.map((column) => (
                            <th key={column.name} scope="col"
                                className={column.name === 'C'
                                    ? 'h-6 p-0 leading-5 font-light bg-[#d2d2d2] text-[#217346] border-r border-r-[#b5b5b5] border-b-3 border-b-[#217346]'
                                    : 'h-6 p-0 align-top leading-5 font-light bg-[#efefef] border-r border-r-[#b5b5b5] border-b border-b-[#9b9b9b]'}>
                                {column.name}
                            </th>
                        ))}
                    </tr>
                    </thead>
                    <tbody>
                    {rows.map((row) => (
                        <tr key={row}>
                            <th scope="row"
                                className={row === ACTIVE_ROW
                                    ? 'h-[25px] p-0 pl-[2px] align-top font-light bg-[#d2d2d2] text-[#217346] border-b border-b-[#b5b5b5] border-r-3 border-r-[#217346]'
                                    : 'h-[25px] p-0 align-top font-light bg-[#efefef] border-b border-b-[#b5b5b5] border-r border-r-[#9b9b9b]'}>
                                {row}
                            </th>
                            {columns.map((column, index) => (
                                <Cell key={column.name} row={row} column={column} index={index}/>
                            ))}
                        </tr>
                    ))}
                    </tbody>
                </table>
            </div>
            <div className="w-[22px] flex flex-col items-center py-[5px] gap-[5px]">
                <svg width="10" height="8" viewBox="0 0 10 8"><path d="m5 0 5 8H0z" fill="#6e6e6e"/></svg>
                <div className="flex-1 w-[9px] rounded-full bg-[#6e6e6e]"></div>
                <svg width="10" height="8" viewBox="0 0 10 8"><path d="M5 8 0 0h10z" fill="#6e6e6e"/></svg>
            </div>
        </div>
    );
}

function SheetTabs() {
    return (
        <div className="h-8 shrink-0 flex items-start border-b border-[#c4c4c4] text-[#262626]">
            <button type="button" aria-label="前のシート" className="ml-[25px] mt-[9px]">
                <Svg w={14} h={12}><path d="m9.500 1-5 5 5 5" stroke="#a0a0a0" strokeWidth="1.300"/></Svg>
            </button>
            <button type="button" aria-label="次のシート" className="ml-[18px] mt-[9px]">
                <Svg w={14} h={12}><path d="m4.500 1 5 5-5 5" stroke="#a0a0a0" strokeWidth="1.300"/></Svg>
            </button>
            <button type="button" className="ml-[45px] w-[69px] h-7 flex items-start justify-center rounded-b-md bg-white shadow-[0_1px_1px_rgba(0,0,0,0.2)] text-sm">
                <span className="h-[25px] leading-7 px-[2px] border-b-2 border-[#107c41]">Sheet1</span>
            </button>
            <div className="ml-[3px] mt-[6px] w-px h-[18px] bg-[#cfcfcf]"></div>
            <button type="button" aria-label="新しいシート" className="ml-[41px] mt-[9px]">
                <Svg w={13} h={13}><path d="M6.500 1v11M1 6.500h11" stroke="#333"/></Svg>
            </button>
            <div className="flex-1"></div>
            <div className="mt-3 flex flex-col gap-[2px]">
                <span className="w-[2px] h-[2px] bg-[#333]"></span>
                <span className="w-[2px] h-[2px] bg-[#333]"></span>
                <span className="w-[2px] h-[2px] bg-[#333]"></span>
            </div>
            <div className="ml-[15px] mr-[19px] mt-[7px] w-[38%] h-[17px] px-1 gap-[5px] rounded-lg bg-[#f5f5f5] flex items-center">
                <svg width="8" height="10" viewBox="0 0 8 10"><path d="m0 5 8-5v10z" fill="#6e6e6e"/></svg>
                <div className="flex-1 h-[9px] mr-[6px] rounded-full bg-[#6e6e6e]"></div>
                <svg width="8" height="10" viewBox="0 0 8 10"><path d="M8 5 0 0v10z" fill="#6e6e6e"/></svg>
            </div>
        </div>
    );
}

function StatusBar() {
    const [zoom, setZoom] = useState(50);

    return (
        <footer className="h-[22px] shrink-0 flex items-center pl-3 pr-5 bg-[#f5f5f5] text-xs text-[#262626]">
            <span>準備完了</span>
            <button type="button" aria-label="マクロの記録" className="ml-[19px]">
                <Svg w={15} h={14}>
                    <path d="M13.500 4V.500H.500v12h5M.500 3h13M3 5.500h4M3 8h2.500M3 10.500h2" stroke="#222"/>
                    <circle cx="9.500" cy="9" r="4" stroke="#222"/>
                    <circle cx="9.500" cy="9" r="1.700" fill="#222" stroke="none"/>
                </Svg>
            </button>
            <div className="flex-1"></div>
            <button type="button" aria-label="標準" className="w-10 h-full flex items-center justify-center bg-[#e0e0e0]">
                <Svg w={14} h={14}><path d="M.500.500h13v12H.500zM.500 4.500h13M.500 8.500h13M5 .500v12M9 .500v12" stroke="#222" strokeWidth="1.200"/></Svg>
            </button>
            <button type="button" aria-label="ページ レイアウト" className="w-10 h-full flex items-center justify-center">
                <Svg w={14} h={14}><path d="M.500.500h13v12H.500zM3.500 2.500h7v8h-7zM5 4.500h4M5 6.500h4M5 8.500h4" stroke="#222"/></Svg>
            </button>
            <button type="button" aria-label="改ページ プレビュー" className="w-10 h-full flex items-center justify-center">
                <Svg w={14} h={14}><path d="M.500.500h13v12H.500zM4.500.500v7h-4M4.500 7.500h5v-7" stroke="#222" strokeWidth="1.200"/></Svg>
            </button>
            <button type="button" aria-label="縮小" className="ml-1 w-[10px]">−</button>
            <input type="range" aria-label="ズーム" value={zoom} onChange={(event) => setZoom(event.target.value)}
                   className="mx-[5px] w-[100px] h-4 appearance-none bg-transparent [&::-webkit-slider-runnable-track]:h-px [&::-webkit-slider-runnable-track]:bg-[#666] [&::-webkit-slider-thumb]:appearance-none [&::-webkit-slider-thumb]:w-[5px] [&::-webkit-slider-thumb]:h-[11px] [&::-webkit-slider-thumb]:-mt-[5px] [&::-webkit-slider-thumb]:bg-[#5f5f5f]"/>
            <button type="button" aria-label="拡大" className="w-[10px]">+</button>
            <span className="ml-3">100%</span>
        </footer>
    );
}

/* ---------- find and replace dialog ---------- */

function Key({text, letter, after = ''}) {
    return <>{text}(<u className="underline-offset-2">{letter}</u>){after}</>;
}

function DialogSelect({id, value, className, tall = false}) {
    return (
        <div className={`relative ${className}`}>
            <select id={id} defaultValue={value}
                    className="w-full h-full pl-[3px] appearance-none border border-[#a9a9ad] bg-white text-xs leading-none">
                <option>{value}</option>
            </select>
            <span className={`absolute right-0 inset-y-0 flex items-center justify-center border border-[#a9a9ad] bg-[#e1e1e1] text-[#555] pointer-events-none ${tall ? 'w-[17px]' : 'w-[18px]'}`}>
                <Chevron thin className="w-[10px] h-[10px]"/>
            </span>
        </div>
    );
}

function DialogButton({className, children}) {
    return (
        <button type="button"
                className={`h-[25px] flex items-center justify-center border border-[#adadad] bg-[#e1e1e1] whitespace-nowrap ${className}`}>
            {children}
        </button>
    );
}

function FindReplaceDialog() {
    const fields = [
        {id: 'find', text: '検索する文字列', letter: 'N', value: '開発部', preview: '書式セットなし'},
        {id: 'replace', text: '置換後の文字列', letter: 'E', value: '商品開発部', preview: 'プレビュー', yellow: true},
    ];
    const scopes = [
        {id: 'within', text: '検索場所', letter: 'H', value: 'シート'},
        {id: 'direction', text: '検索方向', letter: 'S', value: '行'},
        {id: 'lookIn', text: '検索対象', letter: 'L', value: '数式'},
    ];
    const checks = [
        {text: '大文字と小文字を区別する', letter: 'C'},
        {text: 'セル内容が完全に同一であるものを検索する', letter: 'O'},
        {text: '半角と全角を区別する', letter: 'B'},
    ];

    return (
        <div role="dialog" aria-label="検索と置換"
             className="absolute left-[743px] top-[344px] z-30 w-[544px] border border-[#6b6b6b] bg-[#f0f0f0] text-xs text-black shadow-[0_6px_16px_rgba(0,0,0,0.35)]">
            <div className="h-[31px] flex items-center pl-2 pr-[17px] bg-white">
                <span className="flex-1">検索と置換</span>
                <button type="button" aria-label="最小化">
                    <Svg w={10} h={10}><path d="M0 5.500h10" stroke="#c4c4c4"/></Svg>
                </button>
                <button type="button" aria-label="最大化" className="ml-[35px]">
                    <Svg w={11} h={11}><path d="M.500.500h9v9h-9z" stroke="#000" strokeWidth="1.200"/></Svg>
                </button>
                <button type="button" aria-label="閉じる" className="ml-[35px]">
                    <Svg w={11} h={11}><path d="m.500.500 10 10M10.500.500l-10 10" stroke="#000" strokeWidth="1.200"/></Svg>
                </button>
            </div>

            <div className="mt-[7px] pl-2 flex items-end">
                <button type="button" className="w-[57px] h-[22px] border-t border-[#dcdcdc] whitespace-nowrap">
                    <Key text="検索" letter="D"/>
                </button>
                <button type="button" className="w-[63px] h-[25px] -mb-px relative border border-b-0 border-[#dcdcdc] bg-white whitespace-nowrap">
                    <Key text="置換" letter="P"/>
                </button>
            </div>

            <div className="mx-[7px] pl-[7px] pr-[6px] pt-[10px] pb-[9px] border border-[#dcdcdc] bg-white">
                <div className="grid grid-cols-[113px_1fr_85px_113px] gap-y-1 items-center">
                    {fields.map((field) => (
                        <div key={field.id} className="contents">
                            <label htmlFor={field.id} className="whitespace-nowrap">
                                <Key text={field.text} letter={field.letter} after=":"/>
                            </label>
                            <DialogSelect id={field.id} value={field.value} className="h-[23px] mr-[10px]"/>
                            <span className={field.yellow
                                ? "h-[23px] flex items-center justify-center border border-black bg-[#ffff00] font-['Noto_Sans_CJK_JP',sans-serif] text-[15px] leading-none font-light"
                                : 'h-[23px] flex items-center justify-center border border-black bg-white text-[11px] leading-none whitespace-nowrap'}>
                                {field.preview}
                            </span>
                            <button type="button"
                                    className="ml-[10px] h-[21px] flex items-center pl-[22px] pr-[3px] border border-[#adadad] bg-[#e1e1e1]">
                                <span className="flex-1 text-left"><Key text="書式" letter="M" after="..."/></span>
                                <svg width="5" height="4" viewBox="0 0 5 4"><path d="M0 0h5L2.500 3.500z"/></svg>
                            </button>
                        </div>
                    ))}
                </div>

                <div className="mt-[11px] flex">
                    <div className="grid grid-cols-[81px_60px] gap-y-1 items-center">
                        {scopes.map((scope) => (
                            <div key={scope.id} className="contents">
                                <label htmlFor={scope.id} className="whitespace-nowrap">
                                    <Key text={scope.text} letter={scope.letter} after=":"/>
                                </label>
                                <DialogSelect id={scope.id} value={scope.value} tall className="h-[25px]"/>
                            </div>
                        ))}
                    </div>
                    <div className="ml-[9px] pt-[3px] flex flex-col gap-[10px] text-[11px]">
                        {checks.map((check) => (
                            <label key={check.letter} className="h-[13px] flex items-center gap-1 whitespace-nowrap">
                                <input type="checkbox" className="w-[13px] h-[13px] appearance-none border border-[#333] bg-white"/>
                                <span><Key text={check.text} letter={check.letter}/></span>
                            </label>
                        ))}
                    </div>
                    <div className="flex-1 min-w-0 flex items-end justify-end">
                        <DialogButton className="w-[102px] shrink-0"><Key text="オプション" letter="T" after=" <<"/></DialogButton>
                    </div>
                </div>
            </div>

            <div className="pt-[10px] pb-[9px] pr-[7px] flex justify-end">
                <DialogButton className="w-[88px]"><Key text="すべて置換" letter="A"/></DialogButton>
                <div className="relative ml-3">
                    <button type="button"
                            className="w-[71px] h-[25px] p-[2px] border border-[#0078d7] bg-[#e0eef9]">
                        <span className="h-full flex items-center justify-center border border-dotted border-black">
                            <Key text="置換" letter="R"/>
                        </span>
                    </button>
                    <span className="absolute -inset-x-[7px] -inset-y-[7px] rounded-lg border-[7px] border-[#ff0000] shadow-[1px_3px_5px_rgba(0,0,0,0.5),inset_0_1px_6px_rgba(0,0,0,0.6)] pointer-events-none"></span>
                    <StepNumber className="left-[9px] top-[37px]">⑪</StepNumber>
                </div>
                <DialogButton className="ml-5 w-[85px]"><Key text="すべて検索" letter="I"/></DialogButton>
                <DialogButton className="ml-[10px] w-[79px]"><Key text="次を検索" letter="F"/></DialogButton>
                <DialogButton className="ml-[19px] w-[74px]">閉じる</DialogButton>
            </div>
        </div>
    );
}

export default function App() {
    return (
        <div className="relative h-screen flex flex-col overflow-hidden border border-[#7d7d7d] bg-[#efefef] font-['Noto_Sans','Noto_Sans_CJK_JP',sans-serif]">
            <TitleBar/>
            <TabBar/>
            <Ribbon/>
            <FormulaBar/>
            <Sheet/>
            <SheetTabs/>
            <StatusBar/>
            <FindReplaceDialog/>
        </div>
    );
}
